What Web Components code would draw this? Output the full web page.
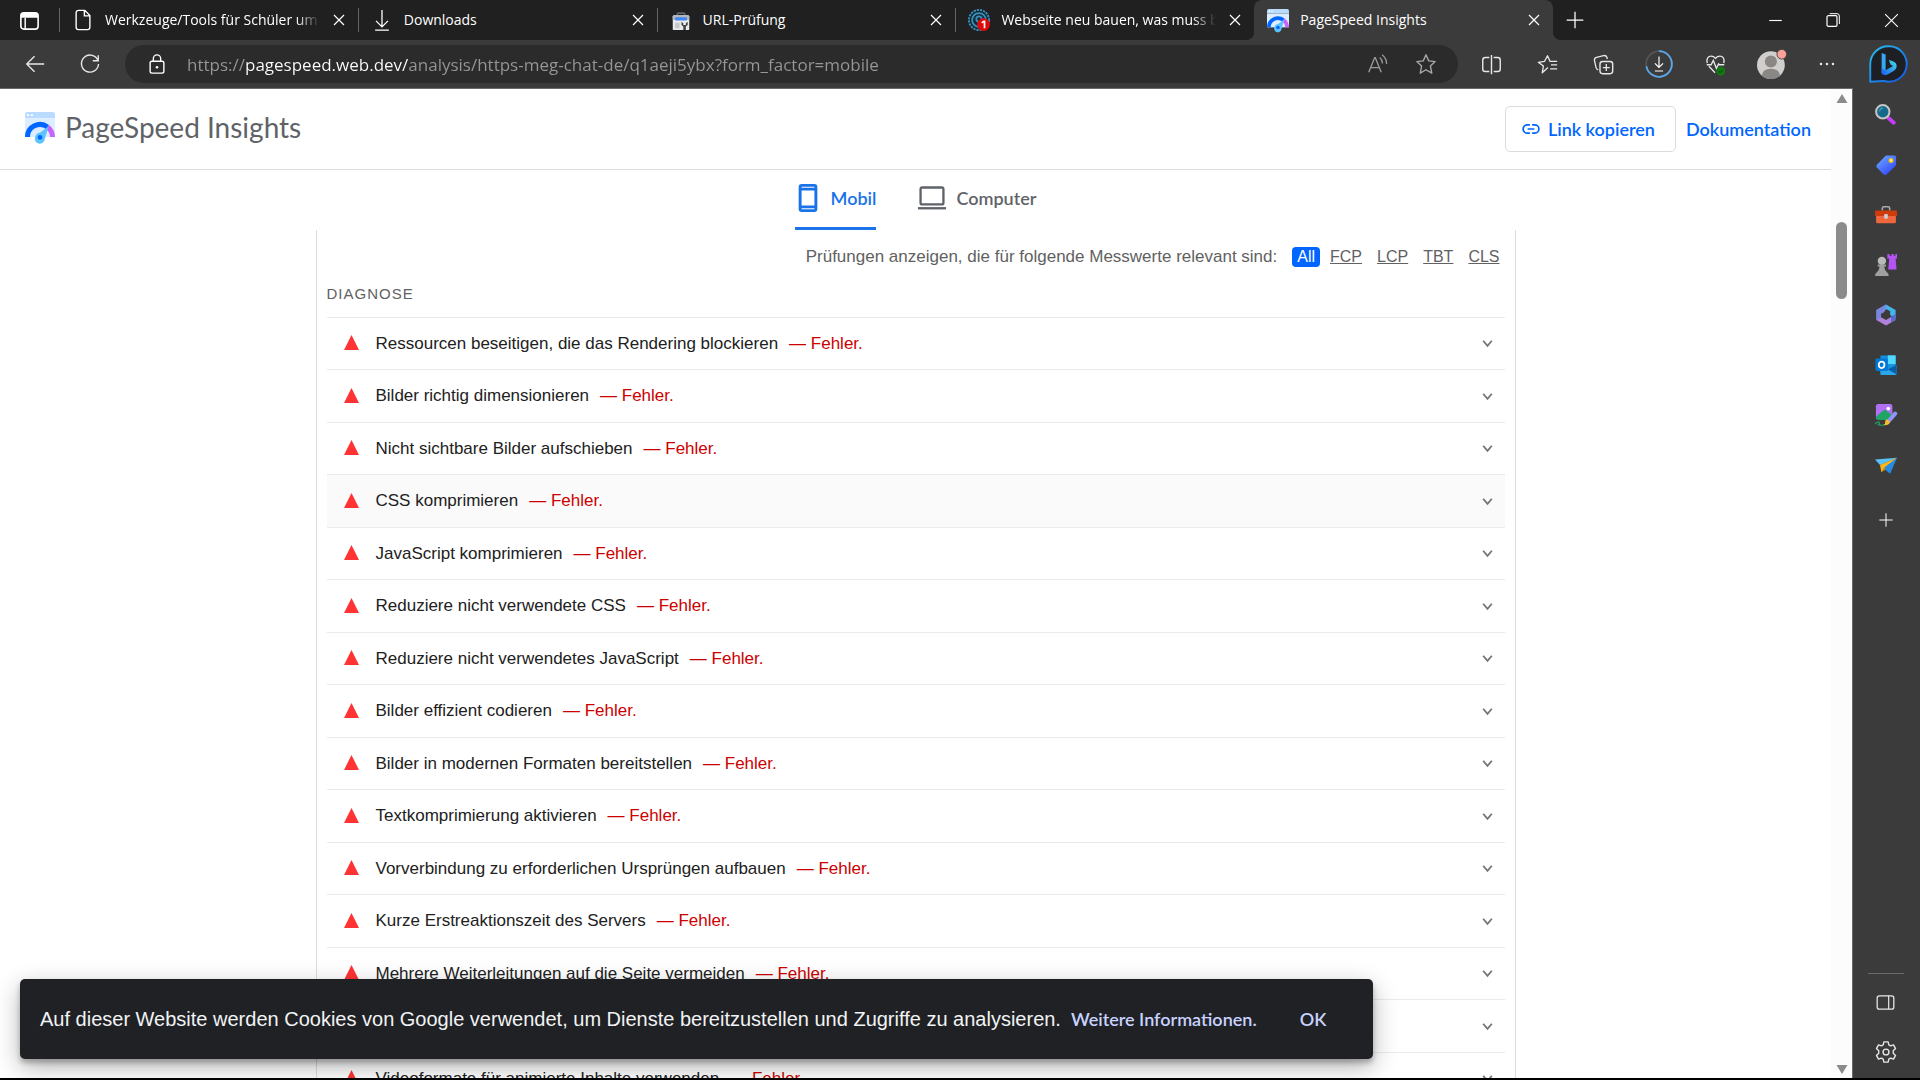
<!DOCTYPE html>
<html lang="de">
<head>
<meta charset="utf-8">
<title>PageSpeed Insights</title>
<style>
  html, body { margin: 0; height: 100%; overflow: hidden; background: #000; }
  body { --chrome: #3b3b3b; --strip: #202020; --blue: #0066ff; --google: Lato, "Open Sans", sans-serif; --arial: "Liberation Sans", Arial, sans-serif; font-family: "Open Sans", sans-serif; }
</style>
</head>
<body>
<browser-window></browser-window>
<script>
const ICONS = {
  workspace: '<rect x="3" y="4" width="18" height="17" rx="3" fill="none" stroke="#fff" stroke-width="1.7"/><path d="M3 9V7a3 3 0 0 1 3-3h12a3 3 0 0 1 3 3v2z" fill="#fff"/><path d="M7.500 9v12" stroke="#fff" stroke-width="1.500"/>',
  file: '<path d="M6.500 1.500H14l5.500 5.500v13a2.500 2.500 0 0 1-2.500 2.500H7A2.500 2.500 0 0 1 4.500 20V4a2.500 2.500 0 0 1 2.500-2.500zM13.500 2v5.500H19" fill="none" stroke="#fff" stroke-width="1.500"/>',
  down: '<path d="M12 1v18M5.500 13l6.500 6.500 6.500-6.500M4.500 23h15" fill="none" stroke="#fff" stroke-width="1.400"/>',
  search: '<path d="M8 7V5.500q0-1 1-1h6q1 0 1 1V7" fill="none" stroke="#5f6368" stroke-width="1.800"/><rect x="3" y="7" width="18" height="16" rx="1" fill="#e8eaed"/><path d="M3 12V8.500q0-2 2-2h14q2 0 2 2V12z" fill="#b4b8bc"/><rect x="5.500" y="9" width="13" height="3.500" rx="1" fill="#4285f4"/><path d="M5.500 15h5v6h-5z" fill="#c6cacd"/><path d="M12.500 14v3.500l2 1.500v4h2.800v-4l2-1.500V14l-2 1.500v2h-2.800v-2z" fill="#444"/>',
  forum: '<circle cx="12" cy="12" r="11" fill="#102a36" stroke="#3d8eb9" stroke-width="2" stroke-dasharray="2.500 1"/><circle cx="12" cy="12" r="7.500" fill="none" stroke="#3d8eb9" stroke-width="2"/><circle cx="12" cy="11" r="3" fill="none" stroke="#3d8eb9" stroke-width="2"/><circle cx="17" cy="17" r="7" fill="#e00808"/><path d="M15 15.200l2.200-1.700h.8V21" fill="none" stroke="#fff" stroke-width="1.900"/>',
  psi: '<path d="M0 2q0-2 2-2h20q2 0 2 2v3H0z" fill="#b9dbff"/><path d="M0 5h24v15H0z" fill="#dcedff"/><circle cx="2.400" cy="2.500" r=".9" fill="#fff"/><circle cx="5.500" cy="2.500" r=".9" fill="#fff"/><path d="M2 20a10 10 0 0 1 16-8" fill="none" stroke="#06f" stroke-width="4"/><path d="M18 12a10 10 0 0 1 4 8" fill="none" stroke="#c764ff" stroke-width="4"/><path d="M18.800 11.500L9 18.500a4 4 0 1 0 6.800 3z" fill="#5cc3ff"/><circle cx="12" cy="20.300" r="3.700" fill="#5cc3ff"/><circle cx="12" cy="20.300" r="1.900" fill="#06f"/>',
  close: '<path d="M4.500 4.500l15 15M19.500 4.500l-15 15" stroke="#fff" stroke-width="1.800"/>',
  plus: '<path d="M12 2v20M2 12h20" stroke="#fff" stroke-width="1.500"/>',
  min: '<path d="M2 12h20" stroke="#fff" stroke-width="1.800"/>',
  restore: '<rect x="3" y="5.500" width="15" height="16" rx="2" fill="none" stroke="#fff" stroke-width="1.800"/><path d="M7 2.500h11q3.500 0 3.500 3.500v12" fill="none" stroke="#fff" stroke-width="1.500"/>',
  winclose: '<path d="M3 3l18 18M21 3L3 21" stroke="#fff" stroke-width="1.500"/>',
  back: '<path d="M22 12H3M11.500 3.500L3 12l8.500 8.500" fill="none" stroke="#e8e8e8" stroke-width="1.500"/>',
  reload: '<path d="M20.800 8.500A9.300 9.300 0 1 0 21.300 12M21 2.500v6h-6" fill="none" stroke="#e8e8e8" stroke-width="1.500"/>',
  lock: '<rect x="4.500" y="9" width="15" height="13" rx="2" fill="none" stroke="#fff" stroke-width="1.500"/><path d="M8 9V6a4 4 0 0 1 8 0v3" fill="none" stroke="#fff" stroke-width="1.500"/><circle cx="12" cy="15.500" r="1.400" fill="#fff"/>',
  read: '<path d="M3 21L9.500 5h.6l6.500 16M5.200 16h9" fill="none" stroke="#9a9a9a" stroke-width="1.500"/><path d="M15 5q3 2.500 3 6.500M17.500 2q5 4 5 10" fill="none" stroke="#9a9a9a" stroke-width="1.400"/>',
  star: '<path d="M12 2l3 6.600 7 .8-5.200 4.800L18.300 22 12 18.300 5.700 22l1.500-7.800L2 9.400l7-.8z" fill="none" stroke="#a8a8a8" stroke-width="1.500" stroke-linejoin="round"/>',
  split: '<path d="M9.500 4H5Q2 4 2 7v10q0 3 3 3h4.500M14.500 4H19q3 0 3 3v10q0 3-3 3h-4.500M12 1v22" fill="none" stroke="#e8e8e8" stroke-width="1.600"/>',
  favs: '<path d="M12.500 15.500l-1.200 1-5.300 5 1.300-7.800L1.500 9.500l7-1L12 2l3 6.500h8M16 12.500h7M15 17h8" fill="none" stroke="#e8e8e8" stroke-width="1.500" stroke-linejoin="round"/>',
  collect: '<rect x="8" y="8.500" width="14.500" height="14" rx="3" fill="none" stroke="#e8e8e8" stroke-width="1.600"/><path d="M15.200 11.500v8M11.200 15.500h8M6 18q-2-.3-2.500-2.500L1.700 7.500q-.5-3 2.300-3.700l8-2q3-.6 4 2.200l.4 1.700" fill="none" stroke="#e8e8e8" stroke-width="1.500"/>',
  dl: '<circle cx="12" cy="12" r="11" fill="none" stroke="#555" stroke-width="1.400"/><path d="M12 1A11 11 0 1 1 1.200 14" fill="none" stroke="#5ba7e6" stroke-width="1.600"/><path d="M12 5.500v9.500M8.500 11.500L12 15l3.500-3.500M8.500 18h7" fill="none" stroke="#fff" stroke-width="1"/>',
  heart: '<path d="M2.500 10.500C1 5 4 2.500 7 2.500q3 0 5 2.500 2-2.500 5-2.500c3 0 6 2.500 4.500 8M4.500 14l7 7.500M2 12.300h5l2.500-5 3.500 9 2.500-5 1 1H22" fill="none" stroke="#e8e8e8" stroke-width="1.500"/><circle cx="18" cy="19.500" r="5" fill="#107c10"/><path d="M15.700 19.500l1.700 1.700 3-3" fill="none" stroke="#0a4d0a" stroke-width="1.200"/>',
  avatar: '<circle cx="11.500" cy="12.500" r="11.500" fill="#d1cfcd"/><circle cx="11.500" cy="9.500" r="5" fill="#8b8785"/><path d="M4 21q.5-5.500 7.500-5.500T19 21q-3 3-7.500 3T4 21z" fill="#8b8785"/><circle cx="20.500" cy="3.500" r="4" fill="#f9a19a" stroke="#3b3b3b" stroke-width=".7"/>',
  dots: '<g fill="#e8e8e8"><circle cx="4" cy="12" r="1.700"/><circle cx="12" cy="12" r="1.700"/><circle cx="20" cy="12" r="1.700"/></g>',
  bing: '<defs><linearGradient id="g" x1="0" y1="0" x2="1" y2="1"><stop stop-color="#28bfe8"/><stop offset="1" stop-color="#1555e8"/></linearGradient><linearGradient id="h" x1="0" x2="1" y1="1" y2="0"><stop stop-color="#1b5df0"/><stop offset="1" stop-color="#42e0e8"/></linearGradient></defs><path d="M12.500 .8a11.200 11.200 0 1 1-3.200 21.900L.8 23.200V12A11.300 11.300 0 0 1 12.500.8z" fill="#1d1f24" stroke="url(#g)" stroke-width="1.200"/><path d="M8 5l2.500 1v9.500L8 18z" fill="#36a7f5"/><path d="M8 14.500v3.300q1.500 2 4 .6l3.800-2.200q2.300-1.700 1.400-4.200-.7-1.500-4.700-2.500l1.200 3 1.500.7-4.700 2.700z" fill="url(#h)"/>',
  magnify: '<path d="M15 15.500l5.500 5" stroke="#c63df5" stroke-width="4.200" stroke-linecap="round"/><circle cx="8.500" cy="8.500" r="7.300" fill="#17698b" stroke="#c5c5c5" stroke-width="2.200"/><path d="M4.800 8a4.500 4.500 0 0 1 4-3.500" fill="none" stroke="#4d9ab8" stroke-width="1.200"/>',
  tag: '<defs><linearGradient id="g" x1="0" y1="0" x2=".8" y2="1"><stop stop-color="#6db3ff"/><stop offset="1" stop-color="#3340ff"/></linearGradient></defs><path d="M12 1.500h9q2 0 2 2V11q0 1.300-1 2.300l-9.500 9q-1.500 1.400-3 0l-7.500-7.500q-1.200-1.500 0-3z" fill="url(#g)"/><circle cx="17.500" cy="7" r="2" fill="#fff3b0" stroke="#f5c400" stroke-width="1.500"/>',
  toolbox: '<path d="M8 7V4.500Q8 3 9.500 3h5Q16 3 16 4.500V7" fill="none" stroke="#aaa" stroke-width="1.700"/><rect x="1.200" y="12" width="21.600" height="9" rx="1.500" fill="#f0673e"/><path d="M0 8.500Q0 7 1.500 7h21Q24 7 24 8.500V13H0z" fill="#cf3c0c"/><rect x="10" y="11" width="4" height="5" rx="1.200" fill="#c9d2d6"/>',
  games: '<g fill="#b653f5"><path d="M13.500 0h2.300v2H18V0h2.500v2h1.800V0H24v5h-1.500l1 12h-9l1-12h-2z"/></g><circle cx="7.500" cy="7.500" r="4.600" fill="#b9b9b9"/><path d="M3 11.500h9v2h-2q.3 4 3 6.500 2 1 2 4H0q0-3 2-4 2.700-2.500 3-6.500H3z" fill="#a0a0a0"/>',
  m365: '<path d="M12 .5L1.500 6.500v11L6.500 15V9.500L14 5z" fill="#8187e3"/><path d="M12 .5l10.500 6V16L16.500 12V8L10 4z" fill="#43b5e8"/><path d="M1.500 17.500l5-3 5.500 3 6-3.500 4.500 3.500L12 23.500z" fill="#b182dd"/><path d="M1.500 6.500L12 .5l-1.500 8L6.500 11v4.500l-5 2z" fill="#7a86de"/><path d="M22.500 11v6.500L17.500 20v-6z" fill="#556bcf"/>',
  outlook: '<rect x="6" y="1.500" width="16.500" height="20" rx="1" fill="#1490df"/><path d="M14 1.500h8.500V11H14z" fill="#50d9ff"/><path d="M6 12l8.500 5 9-5v9.500q0 1.500-1.500 1.500H6z" fill="#28a8ea"/><path d="M14 17l9.500-5v10z" fill="#0a5ca8"/><rect x=".5" y="5" width="13.500" height="13.500" rx="1.200" fill="#0078d4"/><ellipse cx="7.200" cy="11.800" rx="3.100" ry="3.500" fill="none" stroke="#fff" stroke-width="1.900"/>',
  designer: '<rect x="1" y="0" width="18" height="17" rx="2.500" fill="#b170f4"/><path d="M1 14l8-7q1.500-1 3 0l7 5v3q0 2.500-2.500 2.500H3.500Q1 17 1 14z" fill="#20a466"/><circle cx="14.500" cy="5" r="2" fill="#fff"/><path d="M0 22c4-5 6-1 4 0s4 2 7 0" fill="none" stroke="#20a466" stroke-width="1.300"/><path d="M22 10.500l-7 8" stroke="#9295f7" stroke-width="4.400" stroke-linecap="round"/><path d="M13 16.500l3.500 3q-1.500 4-7 3.500 2-1 1.500-3.500 0-2.500 2-3z" fill="#f9bd2b"/>',
  plane: '<path d="M6 13L24 4l-7.500 17.500-6-5z" fill="#268be3"/><path d="M0 6l24-2L5.500 12z" fill="#58c3ff"/><path d="M24 4L5.500 12 7 20l3.500-5.500z" fill="#ffb817"/><path d="M10.500 14.500L7 20l4.500-3z" fill="#e08a00"/>',
  panel: '<rect x="1.500" y="3.500" width="21" height="17" rx="2.800" fill="none" stroke="#e8e8e8" stroke-width="1.600"/><path d="M16 3.500v17" stroke="#e8e8e8" stroke-width="1.500"/>',
  gear: '<path d="M9.700 1h4.600l.8 3.300 1.800 1 3.300-1 2.200 4-2.500 2.400v2.600l2.500 2.400-2.200 4-3.300-1-1.800 1-.8 3.300H9.700l-.8-3.300-1.800-1-3.300 1-2.200-4 2.500-2.400v-2.600L1.600 8.300l2.200-4 3.300 1 1.800-1z" fill="none" stroke="#e8e8e8" stroke-width="1.500" stroke-linejoin="round"/><circle cx="12" cy="12" r="3.200" fill="none" stroke="#e8e8e8" stroke-width="1.500"/>',
  link: '<path d="M10.500 6.500H7a5.500 5.500 0 0 0 0 11h3.500M13.500 6.500H17a5.500 5.500 0 0 1 0 11h-3.500M7.500 12h9" fill="none" stroke="#06f" stroke-width="2.300"/>',
  phone: '<path fill-rule="evenodd" d="M6.500 0h11Q20 0 20 2.500v19Q20 24 17.500 24h-11Q4 24 4 21.500v-19Q4 0 6.500 0zM6.500 5.500v13h11v-13zM6.500 2.300v.9h11v-.9zM6.500 20.700v.9h11v-.9z" fill="#1a73e8"/>',
  laptop: '<rect x="2.200" y="3" width="19.600" height="14.500" rx="1.500" fill="none" stroke="#5f6368" stroke-width="2"/><path d="M0 20.800h24" stroke="#5f6368" stroke-width="2"/>',
  chevron: '<path d="M4 7l8 9.500L20 7" fill="none" stroke="#757575" stroke-width="3.300"/>',
  triangle: '<path d="M12 0l12 24H0z" fill="#f33"/>'
};

function define(name, css, html) {
  const template = document.createElement('template');
  customElements.define(name, class extends HTMLElement {
    connectedCallback() {
      if (this.shadowRoot) return;
      template.innerHTML = '<style>*{box-sizing:border-box}:host{box-sizing:border-box}button{font:inherit;color:inherit;background:none;border:0;padding:0;margin:0}a{color:inherit;text-decoration:none}' + css + '</style>' + (typeof html === 'function' ? html(this) : html);
      this.attachShadow({ mode: 'open' }).append(template.content.cloneNode(true));
    }
  });
}
const icon = (name, size) => `<ui-icon name="${name}" style="--size:${size}px"></ui-icon>`;

define('ui-icon', ':host{display:block;flex:none;width:var(--size);height:var(--size)}svg{display:block;width:100%;height:100%;overflow:visible}',
  el => `<svg viewBox="0 0 24 24" aria-hidden="true">${ICONS[el.getAttribute('name')]}</svg>`);

define('icon-button', ':host{display:grid;flex:none}button{display:grid;place-items:center}',
  el => `<button aria-label="${el.getAttribute('label')}">${icon(el.getAttribute('name'), el.getAttribute('size'))}</button>`);

define('browser-tab', `
  :host{display:flex;align-items:center;flex:1 1 0;min-width:0;height:24px;border-left:1px solid #666;padding:0 8px 0 12px;color:#fff;font-size:14px;position:relative}
  :host([active]){height:40px;background:var(--chrome);border-color:transparent;border-radius:8px 8px 0 0}
  :host([active])::before,:host([active])::after{content:"";position:absolute;bottom:0;width:8px;height:8px}
  :host([active])::before{left:-9px;background:radial-gradient(circle at 0 0,transparent 8px,var(--chrome) 8px)}
  :host([active])::after{right:-8px;background:radial-gradient(circle at 100% 0,transparent 8px,var(--chrome) 8px)}
  .t{display:flex;align-items:center;flex:1;min-width:0;gap:11px;text-align:left}
  .n{flex:1;min-width:0;white-space:nowrap;overflow:hidden;line-height:24px}
  :host([fade]) .n{-webkit-mask:linear-gradient(90deg,#000 calc(100% - 24px),transparent);mask:linear-gradient(90deg,#000 calc(100% - 24px),transparent)}
  icon-button{width:22px;margin-left:8px}`,
  el => `<button class="t" role="tab">${icon(el.getAttribute('icon'), 22)}<span class="n"><slot></slot></span></button><icon-button name="close" size="16" label="Tab schließen"></icon-button>`);

define('tab-strip', `
  :host{display:flex;align-items:center;height:40px;background:var(--strip)}
  .ws{width:59px}.tabs{display:flex;align-items:center;flex:0 1 1494px;min-width:0}.new{width:44px}
  .win{display:flex;margin-left:auto}.win icon-button{width:58px}`,
  `<icon-button class="ws" name="workspace" size="23" label="Arbeitsbereiche"></icon-button>
  <div class="tabs" role="tablist">
    <browser-tab icon="file" fade>Werkzeuge/Tools für Schüler um</browser-tab>
    <browser-tab icon="down">Downloads</browser-tab>
    <browser-tab icon="search">URL-Prüfung</browser-tab>
    <browser-tab icon="forum" fade>Webseite neu bauen, was muss b</browser-tab>
    <browser-tab icon="psi" active>PageSpeed Insights</browser-tab>
  </div>
  <icon-button class="new" name="plus" size="20" label="Neuer Tab"></icon-button>
  <div class="win"><icon-button name="min" size="15" label="Minimieren"></icon-button><icon-button name="restore" size="16" label="Verkleinern"></icon-button><icon-button name="winclose" size="17" label="Schließen"></icon-button></div>`);

define('tool-bar', `
  :host{display:flex;align-items:center;height:48px;background:var(--chrome)}
  .nav{display:flex;padding:0 7px}.nav icon-button{width:55px}
  form{display:flex;align-items:center;flex:1;height:38px;border-radius:19px;background:#2b2b2b;margin:0 5px 0 1px;padding:0 8px 0 4px}
  form icon-button{width:49px}form .lock{width:55px}
  input{flex:1;min-width:0;height:30px;border:0;outline:0;padding:0;margin-left:3px;font:17px "Open Sans",sans-serif;color:transparent;
    background:linear-gradient(90deg,#979797 59px,#fff 59px 221px,#979797 221px);-webkit-background-clip:text;background-clip:text}
  .tools{display:flex}.tools icon-button{width:56px}.bing{width:65px}`,
  `<div class="nav"><icon-button name="back" size="22" label="Zurück"></icon-button><icon-button name="reload" size="22" label="Aktualisieren"></icon-button></div>
  <form><icon-button class="lock" name="lock" size="22" label="Websiteinformationen"></icon-button><input aria-label="Adresse" spellcheck="false" value="https://pagespeed.web.dev/analysis/https-meg-chat-de/q1aeji5ybx?form_factor=mobile"><icon-button name="read" size="22" label="Laut vorlesen"></icon-button><icon-button name="star" size="22" label="Favorit"></icon-button></form>
  <div class="tools"><icon-button name="split" size="21" label="Teilen"></icon-button><icon-button name="favs" size="21" label="Favoriten"></icon-button><icon-button name="collect" size="21" label="Sammlungen"></icon-button><icon-button name="dl" size="28" label="Downloads"></icon-button><icon-button name="heart" size="21" label="Leistung"></icon-button><icon-button name="avatar" size="29" label="Profil"></icon-button><icon-button name="dots" size="18" label="Mehr"></icon-button></div>
  <icon-button class="bing" name="bing" size="38" label="Bing"></icon-button>`);

define('side-bar', `
  :host{display:flex;flex-direction:column;align-items:center;width:68px;padding:2px 2px 0 0;background:var(--chrome);border-left:1px solid #6a6a6a}
  icon-button{height:50px;width:65px}.add{height:60px}.end{margin-top:auto;border-top:1px solid #6a6a6a;width:36px;display:flex;flex-direction:column;align-items:center;padding:3px 0 1px}`,
  ['magnify', 'tag', 'toolbox', 'games', 'm365', 'outlook', 'designer', 'plane'].map(n => `<icon-button name="${n}" size="22" label="${n}"></icon-button>`).join('') +
  `<icon-button class="add" name="plus" size="16" label="Hinzufügen"></icon-button>
  <div class="end"><icon-button name="panel" size="19" label="Seitenleiste"></icon-button><icon-button name="gear" size="22" label="Einstellungen"></icon-button></div>`);

define('page-header', `
  :host{display:flex;align-items:center;height:81px;padding:0 20px 0 25px;border-bottom:1px solid #dadce0;font-family:var(--google)}
  .brand{display:flex;align-items:center;gap:10px;font-size:28px;line-height:36px;color:#5f6368;margin-right:auto;padding-bottom:4px}
  .act{display:flex;align-items:center;gap:10px;color:var(--blue);font-size:18px;font-weight:600}
  button{display:flex;align-items:center;gap:8px;height:46px;padding:0 20px 0 16px;border:1px solid #dadce0;border-radius:5px}`,
  `<a class="brand" href="#">${icon('psi', 30)}<span>PageSpeed Insights</span></a>
  <div class="act"><button>${icon('link', 18)}<span>Link kopieren</span></button><a href="#">Dokumentation</a></div>`);

define('device-tabs', `
  :host{display:flex;justify-content:center;gap:42px;height:60px;font:600 18px var(--google)}
  button{display:flex;align-items:center;gap:10px;color:#5f6368;padding-bottom:2px;border-bottom:3px solid transparent}
  .on{color:#1a73e8;border-color:#1a73e8}.on ui-icon{margin:0 -1px}`,
  `<button class="on">${icon('phone', 28)}<span>Mobil</span></button><button>${icon('laptop', 28)}<span>Computer</span></button>`);

define('metric-filter', `
  :host{display:flex;justify-content:flex-end;align-items:center;height:54px;padding-right:5px;font-size:17px;line-height:20px;color:#616161}
  .l{margin-right:15px}label{font-size:16px;text-decoration:underline;margin-left:15px}label.on{background:var(--blue);color:#fff;text-decoration:none;border-radius:4px;padding:0 5px;margin:0 -5px 0 0}
  input{position:absolute;opacity:0;width:1px;height:1px;margin:0}`,
  '<span class="l">Prüfungen anzeigen, die für folgende Messwerte relevant sind:</span>' +
  ['All', 'FCP', 'LCP', 'TBT', 'CLS'].map((m, i) => `<input type="radio" name="m" id="${m}"${i ? '' : ' checked'}><label for="${m}"${i ? '' : ' class="on"'}>${m}</label>`).join(''));

define('audit-row', `
  :host{display:block;height:53px;border-top:1px solid #ebebeb}
  :host(:nth-of-type(odd)){height:52px}
  :host([hovered]){background:#fafafa}
  button{display:flex;align-items:center;width:100%;height:100%;padding:0 11px 0 17px;font-size:17px;line-height:24px;color:#212121;text-align:left}
  .i{margin-bottom:2px}.t{margin-left:17px}.e{color:#c00;margin-left:11px}.c{margin-left:auto}`,
  el => `<button aria-expanded="false"><ui-icon class="i" name="triangle" style="--size:15px"></ui-icon><span class="t"><slot></slot></span>${el.textContent ? '<span class="e">— Fehler.</span>' : ''}<ui-icon class="c" name="chevron" style="--size:13px"></ui-icon></button>`);

define('audit-card', `
  :host{display:block;width:100%;max-width:1200px;margin:0 auto;padding:0 10px;border:solid #dadce0;border-width:0 1px;font-family:var(--arial)}
  h2{margin:0;height:33px;padding-top:1px;font:15px/18px var(--arial);letter-spacing:1px;color:#616161}`,
  '<metric-filter></metric-filter><h2>DIAGNOSE</h2><slot></slot>');

define('cookie-bar', `
  :host{position:absolute;left:20px;bottom:19px;display:flex;align-items:center;height:80px;padding:0 47px 0 20px;border-radius:5px;background:#202124;color:#f1f3f4;font:20px/28px var(--arial);white-space:nowrap;
    box-shadow:0 4px 5px rgba(0,0,0,.24),0 8px 24px rgba(0,0,0,.3)}
  a,button{font:600 18px/24px var(--google);color:#c8d3ff}a{margin-left:10px}button{margin-left:43px}`,
  '<span>Auf dieser Website werden Cookies von Google verwendet, um Dienste bereitzustellen und Zugriffe zu analysieren.</span><a href="#">Weitere Informationen.</a><button>OK</button>');

define('scroll-bar', `
  :host{display:flex;flex-direction:column;align-items:center;width:21px;background:#fcfcfc;padding:5px 0 4px}
  svg{width:12px;height:9px;fill:#8b8b8b}.thumb{width:11px;height:77px;border-radius:6px;background:#8b8b8b;margin-top:119px}.end{margin-top:auto}`,
  '<svg viewBox="0 0 11 9"><path d="M5.500 0L11 9H0z"/></svg><div class="thumb"></div><svg class="end" viewBox="0 0 11 9"><path d="M0 0h11L5.500 9z"/></svg>');

const AUDITS = ['Ressourcen beseitigen, die das Rendering blockieren', 'Bilder richtig dimensionieren', 'Nicht sichtbare Bilder aufschieben', 'CSS komprimieren', 'JavaScript komprimieren', 'Reduziere nicht verwendete CSS', 'Reduziere nicht verwendetes JavaScript', 'Bilder effizient codieren', 'Bilder in modernen Formaten bereitstellen', 'Textkomprimierung aktivieren', 'Vorverbindung zu erforderlichen Ursprüngen aufbauen', 'Kurze Erstreaktionszeit des Servers', 'Mehrere Weiterleitungen auf die Seite vermeiden', '', 'Videoformate für animierte Inhalte verwenden'];

define('web-page', `
  :host{display:flex;flex:1;min-width:0;overflow:hidden;position:relative;background:#fff;border-top:1px solid #6a6a6a}
  main{flex:1;min-width:0;overflow:hidden}`,
  `<main><page-header></page-header><device-tabs></device-tabs><audit-card>${AUDITS.map((a, i) => `<audit-row${i === 3 ? ' hovered' : ''}>${a}</audit-row>`).join('')}</audit-card></main>
  <scroll-bar></scroll-bar><cookie-bar></cookie-bar>`);

define('browser-window', `
  :host{display:flex;flex-direction:column;height:100vh;border-bottom:2px solid #000}
  .body{display:flex;flex:1;min-height:0}`,
  '<tab-strip></tab-strip><tool-bar></tool-bar><div class="body"><web-page></web-page><side-bar></side-bar></div>');
</script>
</body>
</html>
